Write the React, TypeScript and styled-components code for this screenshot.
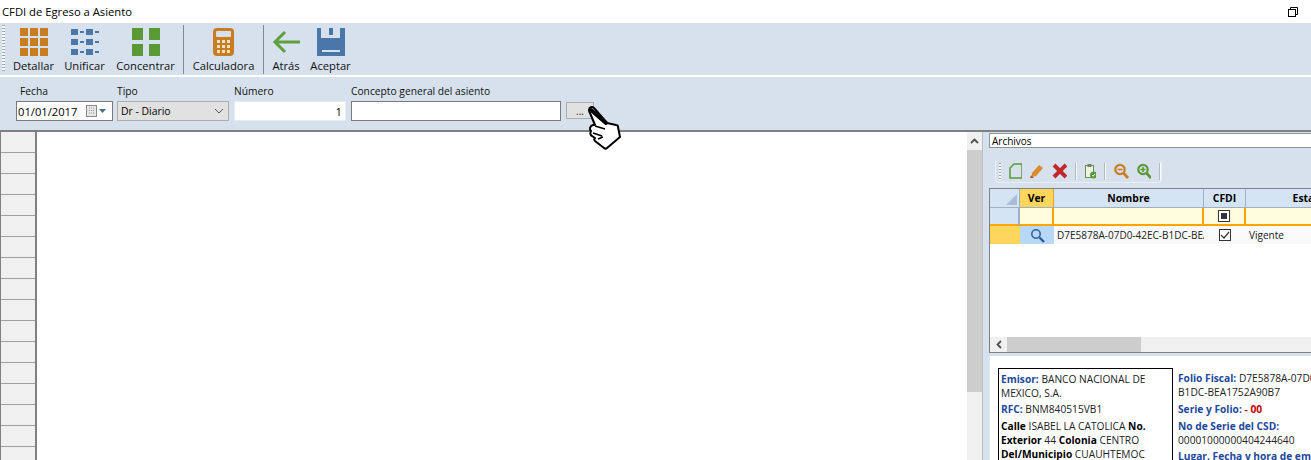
import React from "react";
import styled, { createGlobalStyle } from "styled-components";

const Global = createGlobalStyle`
  html, body { margin: 0; padding: 0; background: #fff; }
  body { font-family: "Open Sans", "Noto Sans", "Liberation Sans", sans-serif; color: #000; }
`;

const panelBlue = "#d7e1ed";

const Shell = styled.div`
  width: 1311px;
  height: 460px;
  overflow: hidden;
  display: flex;
  flex-direction: column;
  font-size: 11px;
`;

const TitleBar = styled.div`
  height: 23px;
  flex: none;
  display: flex;
  align-items: center;
  justify-content: space-between;
  padding: 0 13px 0 2px;
  font-size: 11.25px;
  background: #fff;
`;

const Toolbar = styled.div`
  height: 52px;
  flex: none;
  display: flex;
  background: ${panelBlue};
  padding-left: 2px;
  border-bottom: 2px solid #fff;
`;

const Grip = styled.div`
  width: 3px;
  margin: 2px 3px 0 0;
  height: 46px;
  background: repeating-linear-gradient(to bottom, #9aa5b1 0 1px, #f6f8fb 1px 3px);
`;

const ToolButton = styled.div<{ $w: number }>`
  width: ${(p) => p.$w}px;
  flex: none;
  display: flex;
  flex-direction: column;
  align-items: center;
  padding-top: 5px;
  gap: 2px;
  font-size: 11.2px;
  color: #101010;
  white-space: nowrap;
`;

const ToolSep = styled.div`
  width: 1px;
  flex: none;
  margin: 2px 0 1px;
  background: #7f8a96;
`;

const FormPanel = styled.div`
  height: 46px;
  flex: none;
  display: flex;
  gap: 4px;
  padding: 7px 0 0 16px;
  background: ${panelBlue};
  border-bottom: 2px solid #808080;
`;

const Field = styled.div<{ $w: number; $ml?: number }>`
  width: ${(p) => p.$w}px;
  margin-left: ${(p) => p.$ml ?? 0}px;
  flex: none;
  display: flex;
  flex-direction: column;
  gap: 2px;
`;

const FieldLabel = styled.div<{ $indent?: number }>`
  height: 15px;
  line-height: 15px;
  padding-left: ${(p) => p.$indent ?? 0}px;
  font-size: 10.25px;
  color: #111;
  white-space: nowrap;
`;

const InputBox = styled.div<{ $right?: boolean; $dark?: boolean }>`
  height: 20px;
  box-sizing: border-box;
  display: flex;
  align-items: center;
  justify-content: ${(p) => (p.$right ? "flex-end" : "space-between")};
  padding: 0 3px 0 1px;
  background: #fff;
  border: 1px solid ${(p) => (p.$dark ? "#7a7a7a" : "#e6ebf1")};
  font-size: 11.2px;
`;

const SelectBox = styled.div`
  height: 20px;
  box-sizing: border-box;
  display: flex;
  align-items: center;
  justify-content: space-between;
  padding: 0 4px 0 3px;
  background: #e1e1e1;
  border: 1px solid #adadad;
  font-size: 10.4px;
`;

const DotsButton = styled.div`
  width: 28px;
  height: 17px;
  margin: 18px 0 0 1px;
  flex: none;
  box-sizing: border-box;
  display: flex;
  justify-content: center;
  align-items: flex-end;
  padding-bottom: 2px;
  background: #e1e1e1;
  border: 1px solid #adadad;
  font-size: 10px;
  line-height: 10px;
  color: #222;
`;

const Cursor = styled.svg`
  position: absolute;
  left: 587px;
  top: 104px;
`;

const Main = styled.div`
  flex: 1;
  min-height: 0;
  display: flex;
`;

const RowHeaders = styled.div`
  width: 37px;
  flex: none;
  box-sizing: border-box;
  border-left: 1px solid #808080;
  border-right: 2px solid #808080;
  background: #f0f0f0;
  overflow: hidden;
`;

const RowHead = styled.div`
  height: 21px;
  box-sizing: border-box;
  border-bottom: 1px solid #a0a0a0;
`;

const Sheet = styled.div`
  width: 930px;
  flex: none;
  background: #fff;
`;

const ScrollV = styled.div`
  width: 15px;
  flex: none;
  display: flex;
  flex-direction: column;
  background: #f0f0f0;
`;

const ArrowCell = styled.div`
  height: 18px;
  flex: none;
  display: flex;
  align-items: center;
  justify-content: center;
`;

const ThumbV = styled.div`
  height: 242px;
  flex: none;
  background: #cdcdcd;
`;

const SideGap = styled.div`
  width: 7px;
  flex: none;
  background: ${panelBlue};
  border-left: 1px solid #b9c0c8;
  box-sizing: border-box;
`;

const Side = styled.div`
  flex: 1;
  min-width: 0;
  display: flex;
  flex-direction: column;
  background: ${panelBlue};
  overflow: hidden;
`;

const FileSelect = styled.div`
  height: 15px;
  flex: none;
  margin: 1px 0 0 0;
  box-sizing: border-box;
  border: 1px solid #8d959d;
  border-right: none;
  background: #fff;
  padding-left: 2px;
  font-size: 10px;
  line-height: 14px;
`;

const SideTools = styled.div`
  width: 167px;
  height: 24px;
  flex: none;
  box-sizing: border-box;
  margin: 11px 0 0 6px;
  display: flex;
  align-items: center;
  gap: 8px;
  padding-left: 3px;
  border: 1px solid #e9eff6;
  border-top-color: transparent;
  border-radius: 4px;
`;

const MiniSep = styled.div`
  width: 2px;
  height: 17px;
  flex: none;
  box-sizing: border-box;
  background: #f7f9fb;
  border-left: 1px solid #b1b9c2;
`;

const MiniGrip = styled.div`
  width: 2px;
  height: 17px;
  flex: none;
  background: repeating-linear-gradient(to bottom, #9aa5b1 0 1px, #f6f8fb 1px 3px);
`;

const GridFrame = styled.div`
  height: 165px;
  flex: none;
  margin-top: 5px;
  box-sizing: border-box;
  border-left: 1px solid #808080;
  border-top: 1px solid #808080;
  border-bottom: 1px solid #808080;
  background: #fff;
  display: flex;
  flex-direction: column;
  overflow: hidden;
`;

const GridRow = styled.div<{ $h: number }>`
  width: 385px;
  height: ${(p) => p.$h}px;
  flex: none;
  display: grid;
  grid-template-columns: 30px 34px 150px 42px 129px;
`;

const Th = styled.div<{ $active?: boolean }>`
  box-sizing: border-box;
  display: flex;
  align-items: center;
  justify-content: center;
  font-weight: 700;
  font-size: 10.4px;
  background: ${(p) => (p.$active ? "#ffd65c" : "#d5e4f5")};
  border-right: 1px solid ${(p) => (p.$active ? "#e2a82c" : "#9fb0c4")};
  border-bottom: 1px solid #9fb0c4;
  position: relative;
`;

const Corner = styled.svg`
  position: absolute;
  right: 2px;
  bottom: 2px;
`;

const Filter = styled.div<{ $head?: boolean }>`
  box-sizing: border-box;
  display: flex;
  align-items: center;
  justify-content: center;
  background: ${(p) => (p.$head ? "#d5e4f5" : "#fffbdc")};
  border-right: 2px solid ${(p) => (p.$head ? "#9fb0c4" : "#ffa500")};
  border-bottom: 2px solid #ffa500;
`;

const Td = styled.div<{ $bg?: string; $center?: boolean }>`
  box-sizing: border-box;
  display: flex;
  align-items: center;
  justify-content: ${(p) => (p.$center ? "center" : "flex-start")};
  padding-left: ${(p) => (p.$center ? 0 : 3)}px;
  background: ${(p) => p.$bg ?? "#f9f9f9"};
  font-size: 10px;
  color: #222;
  white-space: nowrap;
  overflow: hidden;
`;

const CheckBox = styled.div`
  width: 12px;
  height: 12px;
  box-sizing: border-box;
  border: 1px solid #333;
  background: #fff;
  display: flex;
  align-items: center;
  justify-content: center;
`;

const CheckFill = styled.div`
  width: 6px;
  height: 6px;
  background: #333;
`;

const GridBody = styled.div`
  flex: 1;
`;

const ScrollH = styled.div`
  height: 15px;
  flex: none;
  display: flex;
  background: #f0f0f0;
`;

const ArrowCellH = styled.div`
  width: 17px;
  flex: none;
  display: flex;
  align-items: center;
  justify-content: center;
`;

const ThumbH = styled.div`
  width: 134px;
  flex: none;
  background: #cdcdcd;
`;

const Preview = styled.div`
  flex: 1;
  min-height: 0;
  margin-top: 3px;
  background: #fff;
  border-left: 1px solid #e3e8ee;
  display: flex;
  gap: 5px;
  padding: 12px 0 0 8px;
  overflow: hidden;
`;

const Card = styled.div`
  width: 175px;
  height: 110px;
  flex: none;
  box-sizing: border-box;
  border: 1px solid #000;
  padding: 3px 2px;
`;

const Details = styled.div`
  flex: none;
  width: 300px;
  padding-top: 3px;
`;

const Line = styled.div<{ $gap?: number }>`
  height: 14px;
  line-height: 14px;
  margin-top: ${(p) => p.$gap ?? 0}px;
  font-size: 10.2px;
  white-space: nowrap;
  color: #222;
`;

const Blue = styled.b`
  color: #22489c;
`;

const Red = styled.b`
  color: #c00000;
`;

const Black = styled.b`
  color: #000;
`;

const IconDetallar = () => (
  <svg width="28" height="28" fill="#c87d20">
    {[0, 10, 20].flatMap((y) =>
      [0, 10, 20].map((x) => <rect key={`${x}-${y}`} x={x} y={y} width="8" height="8" />)
    )}
  </svg>
);

const IconUnificar = () => (
  <svg width="28" height="28" fill="#4a76a8">
    {[1, 11, 21].map((y) => (
      <g key={y}>
        <rect x="0" y={y} width="7" height="6" />
        <rect x="9" y={y + 2} width="4" height="2" />
        <rect x="15" y={y} width="7" height="6" />
        <rect x="24" y={y + 2} width="4" height="2" />
      </g>
    ))}
  </svg>
);

const IconConcentrar = () => (
  <svg width="28" height="28" fill="#5a9a36">
    <rect x="0" y="0" width="11" height="12" />
    <rect x="17" y="0" width="11" height="12" />
    <rect x="0" y="16" width="11" height="12" />
    <rect x="17" y="16" width="11" height="12" />
  </svg>
);

const IconCalc = () => (
  <svg width="21" height="28">
    <rect x="0" y="0" width="21" height="28" rx="4" fill="#c87d20" />
    <rect x="3" y="3" width="15" height="6" rx="1" fill={panelBlue} />
    <g fill="#f3dfc3">
      {[12, 17, 22].flatMap((y) =>
        [4, 9, 14].map((x) => <rect key={`${x}-${y}`} x={x} y={y} width="3" height="3" />)
      )}
    </g>
  </svg>
);

const IconBack = () => (
  <svg width="28" height="28" fill="none" stroke="#5f9e3c">
    <path d="M28 14H3" strokeWidth="3" />
    <path d="M13 4L3 14l10 10" strokeWidth="3" />
  </svg>
);

const IconSave = () => (
  <svg width="28" height="28">
    <rect x="0" y="0" width="28" height="28" fill="#4a76a8" />
    <rect x="4" y="0" width="19" height="10" fill={panelBlue} />
    <rect x="12" y="0" width="4" height="7" fill="#4a76a8" />
    <rect x="5" y="22" width="18" height="2" fill={panelBlue} />
  </svg>
);

const Restore = () => (
  <svg width="10" height="10" fill="none" stroke="#000">
    <rect x="0.5" y="2.5" width="7" height="7" fill="#fff" />
    <path d="M2.5 2.5v-2h7v7h-2" />
  </svg>
);

const CalendarIcon = () => (
  <svg width="23" height="12">
    <rect x="0.5" y="0.5" width="10" height="11" fill="#e6e6e6" stroke="#8a8a8a" />
    <path d="M3 3h5M3 5.5h5M3 8h5" stroke="#9a9a9a" strokeDasharray="1 1" />
    <path d="M13 4h7l-3.5 4z" fill="#4a6a90" />
  </svg>
);

const Chevron = () => (
  <svg width="10" height="6" fill="none" stroke="#555">
    <path d="M1 1l4 4 4-4" />
  </svg>
);

const HandCursor = () => (
  <Cursor width="36" height="48" viewBox="0 0 36 48">
    <path
      d="M2 6c0-3 3-4 5-2l13 15 9 2c1 0 2 1 2 2l2 10-13 11c-1 1-2 1-3 0l-9-7c-1-1-1-2 0-3l-3-2c-2-1-2-3-1-5 -2-2-1-5 2-6l2 0L3 9C2 8 2 7 2 6z"
      fill="#fff"
      stroke="#000"
      strokeWidth="2"
      strokeLinejoin="round"
    />
    <path d="M4 6l15 13" stroke="#000" strokeWidth="4" strokeLinecap="round" />
    <path d="M8 22l10 3M6 29l9 3M11 35l5-2" stroke="#000" strokeWidth="1.6" fill="none" />
  </Cursor>
);

const IconNew = () => (
  <svg width="14" height="16" fill="none" stroke="#5a9a36" strokeWidth="1.5">
    <path d="M5 1h8v14H1V5z" />
  </svg>
);

const IconPencil = () => (
  <svg width="14" height="16">
    <path d="M9 2l4 3-7 8-4 1 0-4z" fill="#d98a2b" />
    <path d="M0 15h4L1 12z" fill="#a8641a" />
  </svg>
);

const IconDelete = () => (
  <svg width="16" height="16" stroke="#c1272d" strokeWidth="4">
    <path d="M2 2l12 12M14 2L2 14" />
  </svg>
);

const IconPaste = () => (
  <svg width="12" height="16">
    <rect x="0.5" y="2.5" width="8" height="12" fill="#eef1e6" stroke="#6c8a5a" />
    <rect x="2.5" y="1" width="4" height="3" fill="#6c8a5a" />
    <circle cx="8.5" cy="12" r="3.5" fill="#5a9a36" />
    <path d="M7 12l1.2 1.2L10 11" stroke="#fff" fill="none" />
  </svg>
);

const IconZoom = ({ color, plus }: { color: string; plus?: boolean }) => (
  <svg width="15" height="16" fill="none" stroke={color}>
    <circle cx="6" cy="6.5" r="4.7" strokeWidth="2.2" />
    <path d="M9.5 10L14 15" strokeWidth="2.8" />
    <path d={plus ? "M3.5 6.5h5M6 4v5" : "M3.5 6.5h5"} strokeWidth="1.6" />
  </svg>
);

const IconLens = () => (
  <svg width="15" height="15" fill="none" stroke="#2f5c92">
    <circle cx="6" cy="6" r="4.2" strokeWidth="1.5" />
    <path d="M9.5 9.5L14 14" strokeWidth="2.4" />
  </svg>
);

const Check = () => (
  <svg width="10" height="10" fill="none" stroke="#333" strokeWidth="1.2">
    <path d="M1 5l3 3 5-6" />
  </svg>
);

const ArrowUp = () => (
  <svg width="9" height="6" fill="none" stroke="#505050" strokeWidth="1.8">
    <path d="M1 5l3.5-3.5L8 5" />
  </svg>
);

const ArrowLeft = () => (
  <svg width="6" height="9" fill="none" stroke="#505050" strokeWidth="1.8">
    <path d="M5 1L1.5 4.5 5 8" />
  </svg>
);

export default function App() {
  return (
    <Shell>
      <Global />
      <TitleBar>
        <span>CFDI de Egreso a Asiento</span>
        <Restore />
      </TitleBar>

      <Toolbar>
        <Grip />
        <ToolButton $w={51}><IconDetallar />Detallar</ToolButton>
        <ToolButton $w={51}><IconUnificar />Unificar</ToolButton>
        <ToolButton $w={71}><IconConcentrar />Concentrar</ToolButton>
        <ToolButton $w={2} />
        <ToolSep />
        <ToolButton $w={79}><IconCalc />Calculadora</ToolButton>
        <ToolSep />
        <ToolButton $w={44}><IconBack />Atrás</ToolButton>
        <ToolButton $w={45}><IconSave />Aceptar</ToolButton>
      </Toolbar>

      <FormPanel>
        <Field $w={97}>
          <FieldLabel $indent={4}>Fecha</FieldLabel>
          <InputBox $dark>
            01/01/2017
            <CalendarIcon />
          </InputBox>
        </Field>
        <Field $w={112}>
          <FieldLabel>Tipo</FieldLabel>
          <SelectBox>
            Dr - Diario
            <Chevron />
          </SelectBox>
        </Field>
        <Field $w={112} $ml={1}>
          <FieldLabel>Número</FieldLabel>
          <InputBox $right>1</InputBox>
        </Field>
        <Field $w={210} $ml={1}>
          <FieldLabel>Concepto general del asiento</FieldLabel>
          <InputBox $dark />
        </Field>
        <DotsButton>...</DotsButton>
      </FormPanel>

      <Main>
        <RowHeaders>
          {Array.from({ length: 16 }, (_, i) => (
            <RowHead key={i} />
          ))}
        </RowHeaders>
        <Sheet />
        <ScrollV>
          <ArrowCell><ArrowUp /></ArrowCell>
          <ThumbV />
        </ScrollV>
        <SideGap />
        <Side>
          <FileSelect>Archivos</FileSelect>
          <SideTools>
            <MiniGrip />
            <IconNew />
            <IconPencil />
            <IconDelete />
            <MiniSep />
            <IconPaste />
            <MiniSep />
            <IconZoom color="#c87d20" />
            <IconZoom color="#5a9a36" plus />
            <MiniSep />
          </SideTools>
          <GridFrame>
            <GridRow $h={19}>
              <Th>
                <Corner width="11" height="11">
                  <path d="M11 0v11H0z" fill="#a9bdd4" />
                </Corner>
              </Th>
              <Th $active>Ver</Th>
              <Th>Nombre</Th>
              <Th>CFDI</Th>
              <Th>Estado</Th>
            </GridRow>
            <GridRow $h={18}>
              <Filter $head />
              <Filter />
              <Filter />
              <Filter>
                <CheckBox><CheckFill /></CheckBox>
              </Filter>
              <Filter />
            </GridRow>
            <GridRow $h={18}>
              <Td $bg="#ffd65c" />
              <Td $bg="#b8d8f8" $center><IconLens /></Td>
              <Td>D7E5878A-07D0-42EC-B1DC-BEA1752A90B7</Td>
              <Td $center>
                <CheckBox><Check /></CheckBox>
              </Td>
              <Td>Vigente</Td>
            </GridRow>
            <GridBody />
            <ScrollH>
              <ArrowCellH><ArrowLeft /></ArrowCellH>
              <ThumbH />
            </ScrollH>
          </GridFrame>
          <Preview>
            <Card>
              <Line><Blue>Emisor:</Blue> BANCO NACIONAL DE</Line>
              <Line>MEXICO, S.A.</Line>
              <Line $gap={2}><Blue>RFC:</Blue> BNM840515VB1</Line>
              <Line $gap={3}><Black>Calle</Black> ISABEL LA CATOLICA <Black>No.</Black></Line>
              <Line><Black>Exterior</Black> 44 <Black>Colonia</Black> CENTRO</Line>
              <Line><Black>Del/Municipio</Black> CUAUHTEMOC</Line>
            </Card>
            <Details>
              <Line><Blue>Folio Fiscal:</Blue> D7E5878A-07D0-42EC-</Line>
              <Line>B1DC-BEA1752A90B7</Line>
              <Line $gap={3}><Blue>Serie y Folio:</Blue> <Red>- 00</Red></Line>
              <Line $gap={3}><Blue>No de Serie del CSD:</Blue></Line>
              <Line>00001000000404244640</Line>
              <Line $gap={2}><Blue>Lugar, Fecha y hora de emisión:</Blue></Line>
            </Details>
          </Preview>
        </Side>
      </Main>
      <HandCursor />
    </Shell>
  );
}
